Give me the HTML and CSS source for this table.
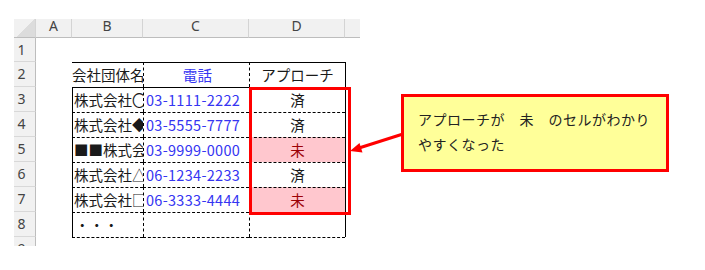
FILE: index.html
```html
<!DOCTYPE html>
<html lang="ja">
<head>
<meta charset="utf-8">
<title>Sheet</title>
<link rel="stylesheet" href="styles.css">
</head>
<body>
<div class="sheet">
  <div class="corner"></div>
  <div class="ch">A</div>
  <div class="ch">B</div>
  <div class="ch">C</div>
  <div class="ch">D</div>
  <div class="ch ch-e"></div>

  <div class="rh">1</div>
  <div class="c"></div><div class="c"></div><div class="c"></div><div class="c"></div><div class="c"></div>

  <div class="rh">2</div>
  <div class="c"></div>
  <div class="c name st first">会社団体名</div>
  <div class="c phone center st dl">電話</div>
  <div class="c center st dl">アプローチ</div>
  <div class="c sl"></div>

  <div class="rh">3</div>
  <div class="c"></div>
  <div class="c name st sl">株式会社〇</div>
  <div class="c phone st dl">03-1111-2222</div>
  <div class="c center st dl">済</div>
  <div class="c sl"></div>

  <div class="rh">4</div>
  <div class="c"></div>
  <div class="c name dt sl">株式会社◆</div>
  <div class="c phone dt dl">03-5555-7777</div>
  <div class="c center dt dl">済</div>
  <div class="c sl"></div>

  <div class="rh">5</div>
  <div class="c"></div>
  <div class="c name dt sl">■■株式会社</div>
  <div class="c phone dt dl">03-9999-0000</div>
  <div class="c center dt dl bad">未</div>
  <div class="c sl"></div>

  <div class="rh">6</div>
  <div class="c"></div>
  <div class="c name dt sl">株式会社△</div>
  <div class="c phone dt dl">06-1234-2233</div>
  <div class="c center dt dl">済</div>
  <div class="c sl"></div>

  <div class="rh">7</div>
  <div class="c"></div>
  <div class="c name dt sl">株式会社□</div>
  <div class="c phone dt dl">06-3333-4444</div>
  <div class="c center dt dl bad">未</div>
  <div class="c sl"></div>

  <div class="rh">8</div>
  <div class="c"></div>
  <div class="c name dt sl dots">・・・</div>
  <div class="c phone dt dl"></div>
  <div class="c center dt dl"></div>
  <div class="c sl"></div>

  <div class="rh rh-last">9</div>
  <div class="c"></div>
  <div class="c dt"></div>
  <div class="c dt"></div>
  <div class="c dt"></div>
  <div class="c"></div>
</div>

<div class="redbox"></div>

<svg class="arrow" width="70" height="40" viewBox="340 125 70 40" xmlns="http://www.w3.org/2000/svg">
  <line x1="403" y1="134" x2="359" y2="148" stroke="#ff0000" stroke-width="3"/>
  <polygon points="350,151 362.5,152.5 359.5,143" fill="#ff0000"/>
</svg>

<div class="callout">アプローチが　未　のセルがわかり<br>やすくなった</div>
</body>
</html>
```

FILE: styles.css
```css
html, body {
  margin: 0;
  padding: 0;
  background: #ffffff;
}

body {
  position: relative;
  width: 705px;
  height: 270px;
  overflow: hidden;
  font-family: "Noto Sans CJK JP", "Noto Sans", sans-serif;
}

.sheet {
  display: grid;
  grid-template-columns: 22px 36px 71px 106px 96px 15px;
  grid-template-rows: 19px 24px 25px 25px 25px 25px 25px 25px 25px 9px;
  margin: 19px 0 0 14px;
  width: 346px;
}

.corner {
  box-sizing: border-box;
  background: linear-gradient(135deg, #f1f1f1 0, #f1f1f1 52%, #dcdcdc 52%, #dcdcdc 100%);
  border-right: 1px solid #d4d4d4;
  border-bottom: 1px solid #bdbdbd;
}

.ch {
  box-sizing: border-box;
  background: #f1f1f1;
  border-right: 1px solid #d4d4d4;
  border-bottom: 1px solid #bdbdbd;
  color: #444444;
  font-family: "Noto Sans", "Open Sans", sans-serif;
  font-size: 14px;
  line-height: 12px;
  text-align: center;
  padding-top: 1px;
}

.ch-e {
  border-right: none;
}

.rh {
  box-sizing: border-box;
  background: #f1f1f1;
  border-right: 1px solid #bdbdbd;
  border-bottom: 1px solid #d8d8d8;
  color: #444444;
  font-family: "Noto Sans", "Open Sans", sans-serif;
  font-size: 14px;
  line-height: 24px;
  text-align: center;
  padding-right: 6px;
  overflow: hidden;
}

.rh-last {
  border-bottom: none;
}

.c {
  box-sizing: border-box;
  font-size: 14.5px;
  line-height: 24px;
  white-space: nowrap;
  overflow: hidden;
  color: #1a1a1a;
}

.name {
  padding-left: 1px;
}

.first {
  padding-left: 0;
}

.phone {
  color: #3535f2;
  padding-left: 2px;
  letter-spacing: 0.3px;
}

.center {
  text-align: center;
}

.bad {
  background: #ffc7ce;
  color: #9c0006;
}

.dots {
  padding-left: 2px;
}

.st { border-top: 1px solid #000000; }
.dt { border-top: 1px dashed #000000; }
.sl { border-left: 1px solid #000000; }
.dl { border-left: 1px dashed #000000; }

.redbox {
  position: absolute;
  left: 249px;
  top: 87px;
  width: 102px;
  height: 128px;
  box-sizing: border-box;
  border: 3px solid #ff0000;
}

.arrow {
  position: absolute;
  left: 340px;
  top: 125px;
}

.callout {
  position: absolute;
  left: 401px;
  top: 94px;
  width: 268px;
  height: 78px;
  box-sizing: border-box;
  border: 3px solid #ff0000;
  background: #ffff99;
  color: #222222;
  font-size: 14px;
  letter-spacing: 0.5px;
  line-height: 25px;
  padding: 10px 0 0 14px;
}
```
